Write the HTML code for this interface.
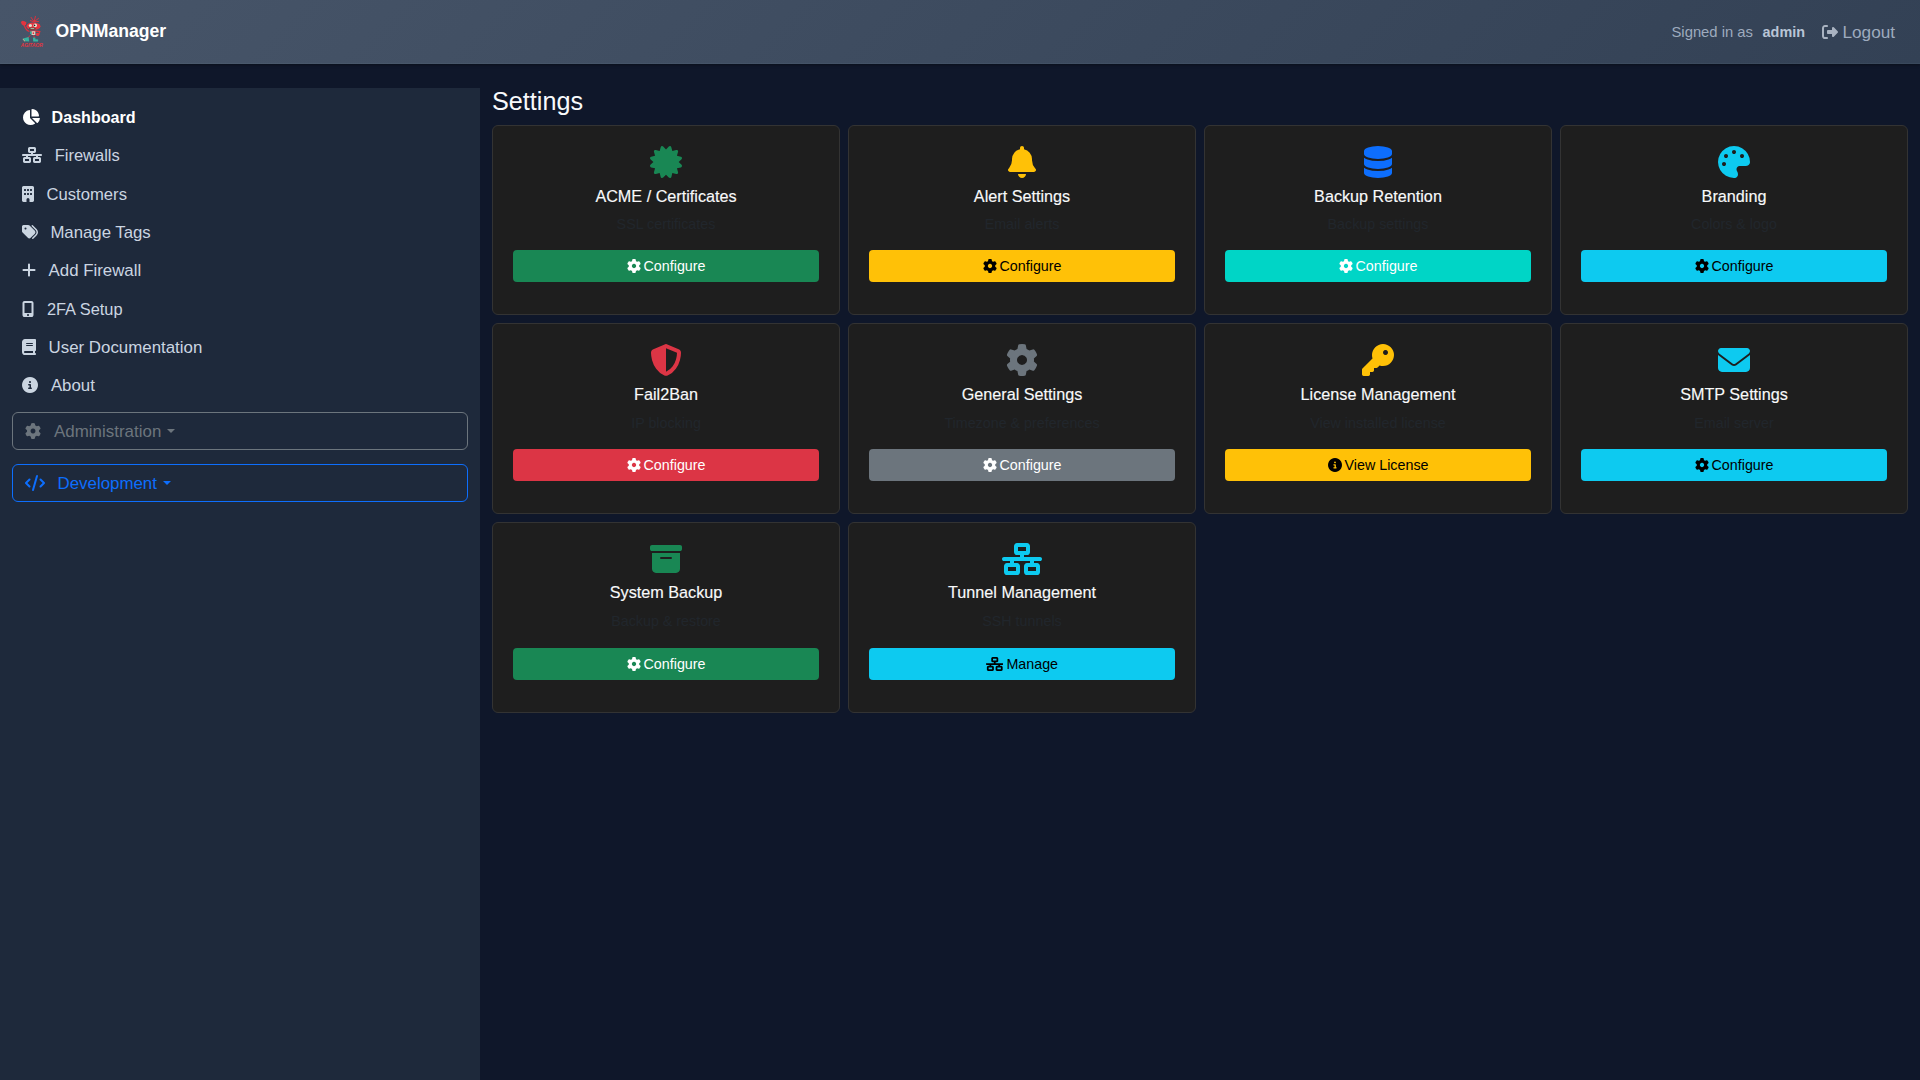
<!DOCTYPE html>
<html><head><meta charset="utf-8"><title>OPNManager - Settings</title>
<style>
html,body{margin:0;padding:0;}
body{width:1920px;height:1080px;position:relative;overflow:hidden;background:#0f172a;font-family:"Liberation Sans",sans-serif;}
#hdr{position:absolute;left:0;top:0;width:1920px;height:64px;box-sizing:border-box;border-bottom:1px solid rgba(148,163,184,.07);box-shadow:0 1px 3px rgba(0,0,0,.35);background:linear-gradient(135deg,#475569 0%,#334155 100%);}
#side{position:absolute;left:0;top:88px;width:480px;height:992px;background:#1e293b;}
.card{position:absolute;width:348px;box-sizing:border-box;background:#1e1e1e;border:1px solid #333;border-radius:6px;}
.btn{position:absolute;width:306px;height:32px;border-radius:4px;text-align:center;line-height:32px;font-size:14.3px;white-space:nowrap;}
</style></head><body>
<div id="hdr"></div>
<svg style="position:absolute;left:19px;top:15px;width:26px;height:33px" viewBox="0 0 26 33">
<g stroke="#e0303c" stroke-width="1" stroke-linecap="round" fill="none">
<path d="M15.3 6.5 L16.4 1.3 M15 6.5 L12.1 2.4 M15.5 6.5 L19.5 3.4 M15.6 6.8 L19.5 6.5 M14.8 6.8 L11.4 5.6"/>
<path d="M9.8 16.3 Q6.5 15 5 9.5" stroke-width="1.2"/>
<path d="M16.5 16.2 L20.8 16.6 L20 19" stroke-width="1.2"/>
<path d="M11 20.5 L8.6 23.2 M14.8 20.5 L15.4 23" stroke-width="1"/>
</g>
<g fill="#e3343f">
<ellipse cx="14.3" cy="11.3" rx="6.9" ry="3.8"/>
<ellipse cx="19.6" cy="11.2" rx="1.8" ry="2.3"/>
<path d="M1.8 7 L3.5 5.8 L5.5 6.2 L7.4 7.2 L7 9.8 L5 10.8 L2.8 9.6 Z"/>
<ellipse cx="18.6" cy="19.4" rx="1.8" ry="1.6"/>
<rect x="10.8" y="15.6" width="5.8" height="1.2"/>
<text x="12.7" y="32.2" font-size="5.6" font-family="Liberation Sans" font-weight="bold" font-style="italic" text-anchor="middle" textLength="22" lengthAdjust="spacingAndGlyphs">AGITAOR</text>
</g>
<circle cx="11.4" cy="10.5" r="1.6" fill="#dfe3cf"/><circle cx="16.2" cy="10.4" r="1.8" fill="#eceedd"/>
<circle cx="15.6" cy="10.4" r="0.8" fill="#1a1a1a"/>
<rect x="10.3" y="12.8" width="6.2" height="1.8" rx="0.5" fill="#2e4a3c"/>
<rect x="11.5" y="13.1" width="3.8" height="0.7" fill="#cfd8c0"/>
<rect x="12.5" y="16.3" width="3.8" height="3.6" fill="#e6e2cf"/><rect x="13.6" y="17.3" width="1.6" height="1.7" fill="#e3343f"/>
<rect x="11" y="16.3" width="1.5" height="2.8" fill="#2fae9c"/>
<path d="M4 23.4 L9.6 22 L10.2 26.6 L6.4 26.2 Z" fill="#35b3a0"/>
<path d="M4 23.4 L6.4 26.2 L5.6 26.6 L3.6 24.2 Z" fill="#c9c39a"/>
<path d="M13.9 22.4 L16.6 22.8 L16.2 24.2 L19.2 24.4 L19 26.6 L14.2 26.6 Z" fill="#35b3a0"/>
</svg>
<div style="position:absolute;left:55.60px;top:23px;font-size:17.6px;line-height:17.6px;color:#ffffff;font-weight:bold;white-space:nowrap;">OPNManager</div>
<div style="position:absolute;left:1671.50px;top:25px;font-size:14.8px;line-height:14.8px;color:#9eabbe;font-weight:normal;white-space:nowrap;">Signed in as</div>
<div style="position:absolute;left:1762.60px;top:25px;font-size:14.4px;line-height:14.4px;color:#b9c5d6;font-weight:bold;white-space:nowrap;">admin</div>
<svg style="width:16.000px;height:16px;position:absolute;left:1821.60px;top:24.00px;" viewBox="0 0 512 512" fill="#a9b3c1"><path d="M378 106 501 229 378 106 501 229Q512 240 512 256Q512 272 501 283L378 406Q368 416 354 416Q340 416 330 406Q320 396 320 382V320H192Q178 320 169 311Q160 302 160 288V224Q160 210 169 201Q178 192 192 192H320V130Q320 116 330 106Q340 96 354 96Q368 96 378 106ZM160 96H96H160H96Q82 96 73 105Q64 114 64 128V384Q64 398 73 407Q82 416 96 416H160Q174 416 183 425Q192 434 192 448Q192 462 183 471Q174 480 160 480H96Q55 479 28 452Q1 425 0 384V128Q1 87 28 60Q55 33 96 32H160Q174 32 183 41Q192 50 192 64Q192 78 183 87Q174 96 160 96Z"/></svg>
<div style="position:absolute;left:1842.50px;top:24px;font-size:17.2px;line-height:17.2px;color:#9eabbe;font-weight:normal;white-space:nowrap;">Logout</div>
<div id="side"></div>
<svg style="width:18.000px;height:16px;position:absolute;left:22.00px;top:109.00px;" viewBox="0 0 576 512" fill="#ffffff"><path d="M304 240V17V240V17Q305 2 320 0Q383 1 433 31Q484 60 513 111Q543 161 544 224Q542 239 527 240H304ZM32 272Q34 179 92 114Q149 48 239 34Q254 34 256 50V288L413 445Q423 457 411 468Q351 511 272 512Q205 511 151 479Q97 447 65 393Q33 339 32 272ZM558 288Q574 290 574 305Q561 391 500 447Q489 456 479 447L320 288H558Z"/></svg>
<div style="position:absolute;left:51.60px;top:109px;font-size:16.08px;line-height:16.08px;color:#ffffff;font-weight:bold;white-space:nowrap;">Dashboard</div>
<svg style="width:20.000px;height:16px;position:absolute;left:22.00px;top:147.00px;" viewBox="0 0 640 512" fill="#cbd5e1"><path d="M256 64H384H256H384V128H256V64ZM240 0Q220 1 206 14Q193 28 192 48V144Q193 164 206 178Q220 191 240 192H288V224H32Q18 224 9 233Q0 242 0 256Q0 270 9 279Q18 288 32 288H128V320H80Q60 321 46 334Q33 348 32 368V464Q33 484 46 498Q60 511 80 512H240Q260 511 274 498Q287 484 288 464V368Q287 348 274 334Q260 321 240 320H192V288H448V320H400Q380 321 366 334Q353 348 352 368V464Q353 484 366 498Q380 511 400 512H560Q580 511 594 498Q607 484 608 464V368Q607 348 594 334Q580 321 560 320H512V288H608Q622 288 631 279Q640 270 640 256Q640 242 631 233Q622 224 608 224H352V192H400Q420 191 434 178Q447 164 448 144V48Q447 28 434 14Q420 1 400 0H240ZM96 448V384V448V384H224V448H96ZM416 384H544H416H544V448H416V384Z"/></svg>
<div style="position:absolute;left:54.70px;top:147px;font-size:16.5px;line-height:16.5px;color:#cbd5e1;font-weight:normal;white-space:nowrap;">Firewalls</div>
<svg style="width:12.000px;height:16px;position:absolute;left:22.00px;top:186.00px;" viewBox="0 0 384 512" fill="#cbd5e1"><path d="M48 0Q28 1 14 14Q1 28 0 48V464Q1 484 14 498Q28 511 48 512H144V432Q145 412 158 398Q172 385 192 384Q212 385 226 398Q239 412 240 432V512H336Q356 511 370 498Q383 484 384 464V48Q383 28 370 14Q356 1 336 0H48ZM64 240Q65 225 80 224H112Q127 225 128 240V272Q127 287 112 288H80Q65 287 64 272V240ZM176 224H208H176H208Q223 225 224 240V272Q223 287 208 288H176Q161 287 160 272V240Q161 225 176 224ZM256 240Q257 225 272 224H304Q319 225 320 240V272Q319 287 304 288H272Q257 287 256 272V240ZM80 96H112H80H112Q127 97 128 112V144Q127 159 112 160H80Q65 159 64 144V112Q65 97 80 96ZM160 112Q161 97 176 96H208Q223 97 224 112V144Q223 159 208 160H176Q161 159 160 144V112ZM272 96H304H272H304Q319 97 320 112V144Q319 159 304 160H272Q257 159 256 144V112Q257 97 272 96Z"/></svg>
<div style="position:absolute;left:46.50px;top:187px;font-size:16.65px;line-height:16.65px;color:#cbd5e1;font-weight:normal;white-space:nowrap;">Customers</div>
<svg style="width:16.000px;height:16px;position:absolute;left:22.00px;top:224.00px;" viewBox="0 0 512 512" fill="#cbd5e1"><path d="M345 39 473 168 345 39 473 168Q512 210 512 264Q512 318 473 360L361 473Q344 487 327 473Q313 456 327 439L439 326Q464 299 464 264Q464 229 439 202L311 73Q297 56 311 39Q328 25 345 39ZM0 230V80V230V80Q1 60 14 46Q28 33 48 32H198Q224 32 243 51L411 219Q430 238 430 264Q430 289 411 309L277 443Q258 461 232 461Q207 461 187 443L19 275Q0 256 0 230ZM144 144Q144 130 135 121Q126 112 112 112Q98 112 89 121Q80 130 80 144Q80 158 89 167Q98 176 112 176Q126 176 135 167Q144 158 144 144Z"/></svg>
<div style="position:absolute;left:50.40px;top:225px;font-size:16.77px;line-height:16.77px;color:#cbd5e1;font-weight:normal;white-space:nowrap;">Manage Tags</div>
<svg style="width:14.000px;height:16px;position:absolute;left:22.00px;top:262.00px;" viewBox="0 0 448 512" fill="#cbd5e1"><path d="M256 80Q256 66 247 57Q238 48 224 48Q210 48 201 57Q192 66 192 80V224H48Q34 224 25 233Q16 242 16 256Q16 270 25 279Q34 288 48 288H192V432Q192 446 201 455Q210 464 224 464Q238 464 247 455Q256 446 256 432V288H400Q414 288 423 279Q432 270 432 256Q432 242 423 233Q414 224 400 224H256V80Z"/></svg>
<div style="position:absolute;left:48.60px;top:263px;font-size:16.83px;line-height:16.83px;color:#cbd5e1;font-weight:normal;white-space:nowrap;">Add Firewall</div>
<svg style="width:12.000px;height:16px;position:absolute;left:22.00px;top:301.00px;" viewBox="0 0 384 512" fill="#cbd5e1"><path d="M16 64Q17 37 35 19Q53 1 80 0H304Q331 1 349 19Q367 37 368 64V448Q367 475 349 493Q331 511 304 512H80Q53 511 35 493Q17 475 16 448V64ZM224 448Q224 434 215 425Q206 416 192 416Q178 416 169 425Q160 434 160 448Q160 462 169 471Q178 480 192 480Q206 480 215 471Q224 462 224 448ZM304 64H80H304H80V384H304V64Z"/></svg>
<div style="position:absolute;left:46.90px;top:301px;font-size:16.4px;line-height:16.4px;color:#cbd5e1;font-weight:normal;white-space:nowrap;">2FA Setup</div>
<svg style="width:14.000px;height:16px;position:absolute;left:22.00px;top:339.00px;" viewBox="0 0 448 512" fill="#cbd5e1"><path d="M96 0Q55 1 28 28Q1 55 0 96V416Q1 457 28 484Q55 511 96 512H384H416Q430 512 439 503Q448 494 448 480Q448 466 439 457Q430 448 416 448V384Q430 384 439 375Q448 366 448 352V32Q448 18 439 9Q430 0 416 0H384ZM96 384H352H96H352V448H96Q82 448 73 439Q64 430 64 416Q64 402 73 393Q82 384 96 384ZM128 144Q129 129 144 128H336Q351 129 352 144Q351 159 336 160H144Q129 159 128 144ZM144 192H336H144H336Q351 193 352 208Q351 223 336 224H144Q129 223 128 208Q129 193 144 192Z"/></svg>
<div style="position:absolute;left:48.60px;top:340px;font-size:16.86px;line-height:16.86px;color:#cbd5e1;font-weight:normal;white-space:nowrap;">User Documentation</div>
<svg style="width:16.000px;height:16px;position:absolute;left:22.00px;top:377.00px;" viewBox="0 0 512 512" fill="#cbd5e1"><path d="M256 512Q326 511 384 478Q442 444 478 384Q512 323 512 256Q512 189 478 128Q442 68 384 34Q326 1 256 0Q186 1 128 34Q70 68 34 128Q0 189 0 256Q0 323 34 384Q70 444 128 478Q186 511 256 512ZM216 336H240H216H240V272H216Q194 270 192 248Q194 226 216 224H264Q286 226 288 248V336H296Q318 338 320 360Q318 382 296 384H216Q194 382 192 360Q194 338 216 336ZM256 128Q270 128 279 137Q288 146 288 160Q288 174 279 183Q270 192 256 192Q242 192 233 183Q224 174 224 160Q224 146 233 137Q242 128 256 128Z"/></svg>
<div style="position:absolute;left:50.90px;top:378px;font-size:16.84px;line-height:16.84px;color:#cbd5e1;font-weight:normal;white-space:nowrap;">About</div>
<div style="position:absolute;left:12px;top:412px;width:456px;height:38px;box-sizing:border-box;border:1px solid #6c757d;border-radius:6px"></div>
<svg style="width:16.000px;height:16px;position:absolute;left:25.00px;top:423.00px;" viewBox="0 0 512 512" fill="#6c757d"><path d="M496 167Q500 181 490 191L446 231Q448 243 448 256Q448 269 446 281L490 321Q500 331 496 345Q489 363 480 380L475 388Q465 404 453 419Q443 430 429 426L373 408Q353 424 329 433L317 491Q313 505 298 508Q278 512 256 512Q234 512 213 508Q199 505 195 491L183 433Q159 424 139 408L83 426Q69 430 59 419Q46 404 37 388L32 380Q23 363 16 346Q12 331 22 321L66 282Q64 269 64 256Q64 243 66 231L22 191Q12 181 16 167Q23 149 32 132L37 124Q46 108 59 93Q69 82 83 86L139 104Q159 88 183 78L195 21Q199 7 214 4Q234 0 256 0Q278 0 299 4Q313 7 317 21L329 78Q353 88 373 104L429 86Q443 82 453 93Q466 108 476 124L480 132Q489 149 496 167ZM256 336Q301 335 325 296Q347 256 325 216Q301 177 256 176Q211 177 187 216Q165 256 187 296Q211 335 256 336Z"/></svg>
<div style="position:absolute;left:54.00px;top:424px;font-size:16.94px;line-height:16.94px;color:#6c757d;font-weight:normal;white-space:nowrap;">Administration</div>
<div style="position:absolute;left:166.5px;top:429px;width:0;height:0;border-left:4.5px solid transparent;border-right:4.5px solid transparent;border-top:4.8px solid #6c757d"></div>
<div style="position:absolute;left:12px;top:464px;width:456px;height:38px;box-sizing:border-box;border:1px solid #0d6efd;border-radius:6px"></div>
<svg style="width:20.000px;height:16px;position:absolute;left:25.00px;top:475.00px;" viewBox="0 0 640 512" fill="#0d6efd"><path d="M393 1Q380 -2 368 4Q357 10 353 23L225 471Q222 484 228 496Q234 507 247 511Q260 514 272 508Q283 502 287 489L415 41Q418 28 412 16Q406 5 393 1ZM473 121Q464 131 464 144Q464 157 473 167L563 256L473 345Q464 355 464 368Q464 381 473 391Q483 400 496 400Q509 400 519 391L631 279Q640 269 640 256Q640 243 631 233L519 121Q509 112 496 112Q483 112 473 121ZM167 121Q157 112 144 112Q131 112 121 121L9 233Q0 243 0 256Q0 269 9 279L121 391Q131 400 144 400Q157 400 167 391Q176 381 176 368Q176 355 167 345L77 256L167 167Q176 157 176 144Q176 131 167 121Z"/></svg>
<div style="position:absolute;left:57.50px;top:476px;font-size:16.89px;line-height:16.89px;color:#0d6efd;font-weight:normal;white-space:nowrap;">Development</div>
<div style="position:absolute;left:162.5px;top:481px;width:0;height:0;border-left:4.5px solid transparent;border-right:4.5px solid transparent;border-top:4.8px solid #0d6efd"></div>
<div style="position:absolute;left:492.00px;top:89px;font-size:25.2px;line-height:25.2px;color:#f8fafc;font-weight:normal;white-space:nowrap;">Settings</div>
<div class="card" style="left:492px;top:125px;height:190px"></div>
<svg style="width:32.000px;height:32px;position:absolute;left:650.00px;top:146.00px;" viewBox="0 0 512 512" fill="#198754"><path d="M211 7Q201 -2 188 1Q174 5 171 18L155 81L93 63Q79 60 69 69Q60 79 63 93L81 155L18 171Q5 174 1 188Q-2 201 7 211L54 256L7 301Q-2 311 1 324Q5 338 18 342L81 357L63 419Q60 433 69 443Q79 452 93 449L155 431L171 494Q174 507 188 511Q201 514 211 505L256 459L301 505Q311 514 324 511Q338 507 342 494L357 431L419 449Q433 452 443 443Q452 433 449 419L431 357L494 342Q507 338 511 324Q514 311 505 301L459 256L505 211Q514 201 511 188Q507 174 494 171L431 155L449 93Q452 79 443 69Q433 60 419 63L357 81L341 18Q338 5 324 1Q311 -2 301 7L256 54L211 7Z"/></svg>
<div style="position:absolute;left:466.00px;width:400px;text-align:center;top:188px;font-size:16.2px;line-height:16.2px;color:#f8f9fa;font-weight:normal;white-space:nowrap;-webkit-text-stroke:0.15px #f8f9fa">ACME / Certificates</div>
<div style="position:absolute;left:466.00px;width:400px;text-align:center;top:217px;font-size:14.3px;line-height:14.3px;color:#21262c;font-weight:normal;white-space:nowrap;">SSL certificates</div>
<div class="btn" style="left:513px;top:250px;background:#198754;color:#fff"><svg style="width:14.000px;height:14px;vertical-align:-2px;margin-right:3px" viewBox="0 0 512 512" fill="#fff"><path d="M496 167Q500 181 490 191L446 231Q448 243 448 256Q448 269 446 281L490 321Q500 331 496 345Q489 363 480 380L475 388Q465 404 453 419Q443 430 429 426L373 408Q353 424 329 433L317 491Q313 505 298 508Q278 512 256 512Q234 512 213 508Q199 505 195 491L183 433Q159 424 139 408L83 426Q69 430 59 419Q46 404 37 388L32 380Q23 363 16 346Q12 331 22 321L66 282Q64 269 64 256Q64 243 66 231L22 191Q12 181 16 167Q23 149 32 132L37 124Q46 108 59 93Q69 82 83 86L139 104Q159 88 183 78L195 21Q199 7 214 4Q234 0 256 0Q278 0 299 4Q313 7 317 21L329 78Q353 88 373 104L429 86Q443 82 453 93Q466 108 476 124L480 132Q489 149 496 167ZM256 336Q301 335 325 296Q347 256 325 216Q301 177 256 176Q211 177 187 216Q165 256 187 296Q211 335 256 336Z"/></svg><span style="font-size:14.3px">Configure</span></div>
<div class="card" style="left:848px;top:125px;height:190px"></div>
<svg style="width:28.000px;height:32px;position:absolute;left:1008.00px;top:146.00px;" viewBox="0 0 448 512" fill="#ffc107"><path d="M224 0Q210 0 201 9Q192 18 192 32V51Q136 63 101 106Q65 149 64 208V227Q63 299 16 354L8 363Q-5 378 3 397Q12 415 32 416H416Q436 415 445 397Q453 378 440 363L433 354Q385 300 384 227V208Q383 149 347 106Q312 63 256 51V32Q256 18 247 9Q238 0 224 0ZM269 493Q288 474 288 448H224H160Q160 474 179 493Q198 512 224 512Q250 512 269 493Z"/></svg>
<div style="position:absolute;left:822.00px;width:400px;text-align:center;top:188px;font-size:16.2px;line-height:16.2px;color:#f8f9fa;font-weight:normal;white-space:nowrap;-webkit-text-stroke:0.15px #f8f9fa">Alert Settings</div>
<div style="position:absolute;left:822.00px;width:400px;text-align:center;top:217px;font-size:14.3px;line-height:14.3px;color:#21262c;font-weight:normal;white-space:nowrap;">Email alerts</div>
<div class="btn" style="left:869px;top:250px;background:#ffc107;color:#000"><svg style="width:14.000px;height:14px;vertical-align:-2px;margin-right:3px" viewBox="0 0 512 512" fill="#000"><path d="M496 167Q500 181 490 191L446 231Q448 243 448 256Q448 269 446 281L490 321Q500 331 496 345Q489 363 480 380L475 388Q465 404 453 419Q443 430 429 426L373 408Q353 424 329 433L317 491Q313 505 298 508Q278 512 256 512Q234 512 213 508Q199 505 195 491L183 433Q159 424 139 408L83 426Q69 430 59 419Q46 404 37 388L32 380Q23 363 16 346Q12 331 22 321L66 282Q64 269 64 256Q64 243 66 231L22 191Q12 181 16 167Q23 149 32 132L37 124Q46 108 59 93Q69 82 83 86L139 104Q159 88 183 78L195 21Q199 7 214 4Q234 0 256 0Q278 0 299 4Q313 7 317 21L329 78Q353 88 373 104L429 86Q443 82 453 93Q466 108 476 124L480 132Q489 149 496 167ZM256 336Q301 335 325 296Q347 256 325 216Q301 177 256 176Q211 177 187 216Q165 256 187 296Q211 335 256 336Z"/></svg><span style="font-size:14.3px">Configure</span></div>
<div class="card" style="left:1204px;top:125px;height:190px"></div>
<svg style="width:28.000px;height:32px;position:absolute;left:1364.00px;top:146.00px;" viewBox="0 0 448 512" fill="#0d6efd"><path d="M448 80V128V80V128Q446 162 382 185Q319 207 224 208Q129 207 66 185Q2 162 0 128V80Q2 46 66 23Q129 1 224 0Q319 1 382 23Q446 46 448 80ZM393 215Q425 204 448 186V288Q446 322 382 345Q319 367 224 368Q129 367 66 345Q2 322 0 288V186Q23 204 55 215Q125 239 224 240Q323 239 393 215ZM0 346Q23 364 55 375Q125 399 224 400Q323 399 393 375Q425 364 448 346V432Q446 466 382 489Q319 511 224 512Q129 511 66 489Q2 466 0 432V346Z"/></svg>
<div style="position:absolute;left:1178.00px;width:400px;text-align:center;top:188px;font-size:16.2px;line-height:16.2px;color:#f8f9fa;font-weight:normal;white-space:nowrap;-webkit-text-stroke:0.15px #f8f9fa">Backup Retention</div>
<div style="position:absolute;left:1178.00px;width:400px;text-align:center;top:217px;font-size:14.3px;line-height:14.3px;color:#21262c;font-weight:normal;white-space:nowrap;">Backup settings</div>
<div class="btn" style="left:1225px;top:250px;background:#00d5c6;color:#fff"><svg style="width:14.000px;height:14px;vertical-align:-2px;margin-right:3px" viewBox="0 0 512 512" fill="#fff"><path d="M496 167Q500 181 490 191L446 231Q448 243 448 256Q448 269 446 281L490 321Q500 331 496 345Q489 363 480 380L475 388Q465 404 453 419Q443 430 429 426L373 408Q353 424 329 433L317 491Q313 505 298 508Q278 512 256 512Q234 512 213 508Q199 505 195 491L183 433Q159 424 139 408L83 426Q69 430 59 419Q46 404 37 388L32 380Q23 363 16 346Q12 331 22 321L66 282Q64 269 64 256Q64 243 66 231L22 191Q12 181 16 167Q23 149 32 132L37 124Q46 108 59 93Q69 82 83 86L139 104Q159 88 183 78L195 21Q199 7 214 4Q234 0 256 0Q278 0 299 4Q313 7 317 21L329 78Q353 88 373 104L429 86Q443 82 453 93Q466 108 476 124L480 132Q489 149 496 167ZM256 336Q301 335 325 296Q347 256 325 216Q301 177 256 176Q211 177 187 216Q165 256 187 296Q211 335 256 336Z"/></svg><span style="font-size:14.3px">Configure</span></div>
<div class="card" style="left:1560px;top:125px;height:190px"></div>
<svg style="width:32.000px;height:32px;position:absolute;left:1718.00px;top:146.00px;" viewBox="0 0 512 512" fill="#0dcaf0"><path d="M512 256Q512 257 512 257Q512 258 512 259Q511 286 490 303Q470 320 442 320H344Q324 321 310 334Q297 348 296 368Q296 373 297 378Q300 392 307 406Q307 407 308 408Q318 428 320 450Q320 474 305 492Q291 510 267 512Q261 512 256 512Q184 511 127 477Q69 443 35 385Q1 328 0 256Q1 184 35 127Q69 69 127 35Q184 1 256 0Q328 1 385 35Q443 69 477 127Q511 184 512 256ZM128 288Q128 274 119 265Q110 256 96 256Q82 256 73 265Q64 274 64 288Q64 302 73 311Q82 320 96 320Q110 320 119 311Q128 302 128 288ZM128 192Q142 192 151 183Q160 174 160 160Q160 146 151 137Q142 128 128 128Q114 128 105 137Q96 146 96 160Q96 174 105 183Q114 192 128 192ZM288 96Q288 82 279 73Q270 64 256 64Q242 64 233 73Q224 82 224 96Q224 110 233 119Q242 128 256 128Q270 128 279 119Q288 110 288 96ZM384 192Q398 192 407 183Q416 174 416 160Q416 146 407 137Q398 128 384 128Q370 128 361 137Q352 146 352 160Q352 174 361 183Q370 192 384 192Z"/></svg>
<div style="position:absolute;left:1534.00px;width:400px;text-align:center;top:188px;font-size:16.2px;line-height:16.2px;color:#f8f9fa;font-weight:normal;white-space:nowrap;-webkit-text-stroke:0.15px #f8f9fa">Branding</div>
<div style="position:absolute;left:1534.00px;width:400px;text-align:center;top:217px;font-size:14.3px;line-height:14.3px;color:#21262c;font-weight:normal;white-space:nowrap;">Colors &amp; logo</div>
<div class="btn" style="left:1581px;top:250px;background:#0dcaf0;color:#000"><svg style="width:14.000px;height:14px;vertical-align:-2px;margin-right:3px" viewBox="0 0 512 512" fill="#000"><path d="M496 167Q500 181 490 191L446 231Q448 243 448 256Q448 269 446 281L490 321Q500 331 496 345Q489 363 480 380L475 388Q465 404 453 419Q443 430 429 426L373 408Q353 424 329 433L317 491Q313 505 298 508Q278 512 256 512Q234 512 213 508Q199 505 195 491L183 433Q159 424 139 408L83 426Q69 430 59 419Q46 404 37 388L32 380Q23 363 16 346Q12 331 22 321L66 282Q64 269 64 256Q64 243 66 231L22 191Q12 181 16 167Q23 149 32 132L37 124Q46 108 59 93Q69 82 83 86L139 104Q159 88 183 78L195 21Q199 7 214 4Q234 0 256 0Q278 0 299 4Q313 7 317 21L329 78Q353 88 373 104L429 86Q443 82 453 93Q466 108 476 124L480 132Q489 149 496 167ZM256 336Q301 335 325 296Q347 256 325 216Q301 177 256 176Q211 177 187 216Q165 256 187 296Q211 335 256 336Z"/></svg><span style="font-size:14.3px">Configure</span></div>
<div class="card" style="left:492px;top:323px;height:191px"></div>
<svg style="width:32.000px;height:32px;position:absolute;left:650.00px;top:344.00px;" viewBox="0 0 512 512" fill="#dc3545"><path d="M256 0Q263 0 269 3L458 83Q475 90 485 105Q496 120 496 140Q497 191 479 260Q461 329 414 394Q368 460 282 503Q256 515 230 503Q144 460 98 394Q51 329 33 260Q15 191 16 140Q16 120 27 105Q37 90 54 83L243 3Q249 0 256 0ZM256 67V445V67V445Q324 410 363 356Q401 302 417 245Q432 187 432 141L256 67Z"/></svg>
<div style="position:absolute;left:466.00px;width:400px;text-align:center;top:386px;font-size:16.2px;line-height:16.2px;color:#f8f9fa;font-weight:normal;white-space:nowrap;-webkit-text-stroke:0.15px #f8f9fa">Fail2Ban</div>
<div style="position:absolute;left:466.00px;width:400px;text-align:center;top:416px;font-size:14.3px;line-height:14.3px;color:#21262c;font-weight:normal;white-space:nowrap;">IP blocking</div>
<div class="btn" style="left:513px;top:449px;background:#dc3545;color:#fff"><svg style="width:14.000px;height:14px;vertical-align:-2px;margin-right:3px" viewBox="0 0 512 512" fill="#fff"><path d="M496 167Q500 181 490 191L446 231Q448 243 448 256Q448 269 446 281L490 321Q500 331 496 345Q489 363 480 380L475 388Q465 404 453 419Q443 430 429 426L373 408Q353 424 329 433L317 491Q313 505 298 508Q278 512 256 512Q234 512 213 508Q199 505 195 491L183 433Q159 424 139 408L83 426Q69 430 59 419Q46 404 37 388L32 380Q23 363 16 346Q12 331 22 321L66 282Q64 269 64 256Q64 243 66 231L22 191Q12 181 16 167Q23 149 32 132L37 124Q46 108 59 93Q69 82 83 86L139 104Q159 88 183 78L195 21Q199 7 214 4Q234 0 256 0Q278 0 299 4Q313 7 317 21L329 78Q353 88 373 104L429 86Q443 82 453 93Q466 108 476 124L480 132Q489 149 496 167ZM256 336Q301 335 325 296Q347 256 325 216Q301 177 256 176Q211 177 187 216Q165 256 187 296Q211 335 256 336Z"/></svg><span style="font-size:14.3px">Configure</span></div>
<div class="card" style="left:848px;top:323px;height:191px"></div>
<svg style="width:32.000px;height:32px;position:absolute;left:1006.00px;top:344.00px;" viewBox="0 0 512 512" fill="#6c757d"><path d="M496 167Q500 181 490 191L446 231Q448 243 448 256Q448 269 446 281L490 321Q500 331 496 345Q489 363 480 380L475 388Q465 404 453 419Q443 430 429 426L373 408Q353 424 329 433L317 491Q313 505 298 508Q278 512 256 512Q234 512 213 508Q199 505 195 491L183 433Q159 424 139 408L83 426Q69 430 59 419Q46 404 37 388L32 380Q23 363 16 346Q12 331 22 321L66 282Q64 269 64 256Q64 243 66 231L22 191Q12 181 16 167Q23 149 32 132L37 124Q46 108 59 93Q69 82 83 86L139 104Q159 88 183 78L195 21Q199 7 214 4Q234 0 256 0Q278 0 299 4Q313 7 317 21L329 78Q353 88 373 104L429 86Q443 82 453 93Q466 108 476 124L480 132Q489 149 496 167ZM256 336Q301 335 325 296Q347 256 325 216Q301 177 256 176Q211 177 187 216Q165 256 187 296Q211 335 256 336Z"/></svg>
<div style="position:absolute;left:822.00px;width:400px;text-align:center;top:386px;font-size:16.2px;line-height:16.2px;color:#f8f9fa;font-weight:normal;white-space:nowrap;-webkit-text-stroke:0.15px #f8f9fa">General Settings</div>
<div style="position:absolute;left:822.00px;width:400px;text-align:center;top:416px;font-size:14.3px;line-height:14.3px;color:#21262c;font-weight:normal;white-space:nowrap;">Timezone &amp; preferences</div>
<div class="btn" style="left:869px;top:449px;background:#6c757d;color:#fff"><svg style="width:14.000px;height:14px;vertical-align:-2px;margin-right:3px" viewBox="0 0 512 512" fill="#fff"><path d="M496 167Q500 181 490 191L446 231Q448 243 448 256Q448 269 446 281L490 321Q500 331 496 345Q489 363 480 380L475 388Q465 404 453 419Q443 430 429 426L373 408Q353 424 329 433L317 491Q313 505 298 508Q278 512 256 512Q234 512 213 508Q199 505 195 491L183 433Q159 424 139 408L83 426Q69 430 59 419Q46 404 37 388L32 380Q23 363 16 346Q12 331 22 321L66 282Q64 269 64 256Q64 243 66 231L22 191Q12 181 16 167Q23 149 32 132L37 124Q46 108 59 93Q69 82 83 86L139 104Q159 88 183 78L195 21Q199 7 214 4Q234 0 256 0Q278 0 299 4Q313 7 317 21L329 78Q353 88 373 104L429 86Q443 82 453 93Q466 108 476 124L480 132Q489 149 496 167ZM256 336Q301 335 325 296Q347 256 325 216Q301 177 256 176Q211 177 187 216Q165 256 187 296Q211 335 256 336Z"/></svg><span style="font-size:14.3px">Configure</span></div>
<div class="card" style="left:1204px;top:323px;height:191px"></div>
<svg style="width:32.000px;height:32px;position:absolute;left:1362.00px;top:344.00px;" viewBox="0 0 512 512" fill="#ffc107"><path d="M336 352Q411 350 460 300Q510 251 512 176Q510 101 460 52Q411 2 336 0Q261 2 212 52Q162 101 160 176Q160 204 168 230L7 391Q0 398 0 408V488Q2 510 24 512H104Q126 510 128 488V448H168Q190 446 192 424V384H232Q242 384 249 377L282 344Q308 352 336 352ZM376 96Q399 97 411 116Q421 136 411 156Q399 175 376 176Q353 175 341 156Q331 136 341 116Q353 97 376 96Z"/></svg>
<div style="position:absolute;left:1178.00px;width:400px;text-align:center;top:386px;font-size:16.2px;line-height:16.2px;color:#f8f9fa;font-weight:normal;white-space:nowrap;-webkit-text-stroke:0.15px #f8f9fa">License Management</div>
<div style="position:absolute;left:1178.00px;width:400px;text-align:center;top:416px;font-size:14.3px;line-height:14.3px;color:#21262c;font-weight:normal;white-space:nowrap;">View installed license</div>
<div class="btn" style="left:1225px;top:449px;background:#ffc107;color:#000"><svg style="width:14.000px;height:14px;vertical-align:-2px;margin-right:3px" viewBox="0 0 512 512" fill="#000"><path d="M256 512Q326 511 384 478Q442 444 478 384Q512 323 512 256Q512 189 478 128Q442 68 384 34Q326 1 256 0Q186 1 128 34Q70 68 34 128Q0 189 0 256Q0 323 34 384Q70 444 128 478Q186 511 256 512ZM216 336H240H216H240V272H216Q194 270 192 248Q194 226 216 224H264Q286 226 288 248V336H296Q318 338 320 360Q318 382 296 384H216Q194 382 192 360Q194 338 216 336ZM256 128Q270 128 279 137Q288 146 288 160Q288 174 279 183Q270 192 256 192Q242 192 233 183Q224 174 224 160Q224 146 233 137Q242 128 256 128Z"/></svg><span style="font-size:14.3px">View License</span></div>
<div class="card" style="left:1560px;top:323px;height:191px"></div>
<svg style="width:32.000px;height:32px;position:absolute;left:1718.00px;top:344.00px;" viewBox="0 0 512 512" fill="#0dcaf0"><path d="M48 64Q28 65 14 78Q1 92 0 112Q1 136 19 150L237 314Q256 326 275 314L493 150Q511 136 512 112Q511 92 498 78Q484 65 464 64H48ZM0 176V384V176V384Q1 411 19 429Q37 447 64 448H448Q475 447 493 429Q511 411 512 384V176L294 339Q277 352 256 352Q235 352 218 339L0 176Z"/></svg>
<div style="position:absolute;left:1534.00px;width:400px;text-align:center;top:386px;font-size:16.2px;line-height:16.2px;color:#f8f9fa;font-weight:normal;white-space:nowrap;-webkit-text-stroke:0.15px #f8f9fa">SMTP Settings</div>
<div style="position:absolute;left:1534.00px;width:400px;text-align:center;top:416px;font-size:14.3px;line-height:14.3px;color:#21262c;font-weight:normal;white-space:nowrap;">Email server</div>
<div class="btn" style="left:1581px;top:449px;background:#0dcaf0;color:#000"><svg style="width:14.000px;height:14px;vertical-align:-2px;margin-right:3px" viewBox="0 0 512 512" fill="#000"><path d="M496 167Q500 181 490 191L446 231Q448 243 448 256Q448 269 446 281L490 321Q500 331 496 345Q489 363 480 380L475 388Q465 404 453 419Q443 430 429 426L373 408Q353 424 329 433L317 491Q313 505 298 508Q278 512 256 512Q234 512 213 508Q199 505 195 491L183 433Q159 424 139 408L83 426Q69 430 59 419Q46 404 37 388L32 380Q23 363 16 346Q12 331 22 321L66 282Q64 269 64 256Q64 243 66 231L22 191Q12 181 16 167Q23 149 32 132L37 124Q46 108 59 93Q69 82 83 86L139 104Q159 88 183 78L195 21Q199 7 214 4Q234 0 256 0Q278 0 299 4Q313 7 317 21L329 78Q353 88 373 104L429 86Q443 82 453 93Q466 108 476 124L480 132Q489 149 496 167ZM256 336Q301 335 325 296Q347 256 325 216Q301 177 256 176Q211 177 187 216Q165 256 187 296Q211 335 256 336Z"/></svg><span style="font-size:14.3px">Configure</span></div>
<div class="card" style="left:492px;top:522px;height:191px"></div>
<svg style="width:32.000px;height:32px;position:absolute;left:650.00px;top:543.00px;" viewBox="0 0 512 512" fill="#198754"><path d="M32 32H480H32H480Q494 32 503 41Q512 50 512 64V96Q512 110 503 119Q494 128 480 128H32Q18 128 9 119Q0 110 0 96V64Q0 50 9 41Q18 32 32 32ZM32 160H480H32H480V416Q479 443 461 461Q443 479 416 480H96Q69 479 51 461Q33 443 32 416V160ZM160 240Q161 255 176 256H336Q351 255 352 240Q351 225 336 224H176Q161 225 160 240Z"/></svg>
<div style="position:absolute;left:466.00px;width:400px;text-align:center;top:584px;font-size:16.2px;line-height:16.2px;color:#f8f9fa;font-weight:normal;white-space:nowrap;-webkit-text-stroke:0.15px #f8f9fa">System Backup</div>
<div style="position:absolute;left:466.00px;width:400px;text-align:center;top:614px;font-size:14.3px;line-height:14.3px;color:#21262c;font-weight:normal;white-space:nowrap;">Backup &amp; restore</div>
<div class="btn" style="left:513px;top:648px;background:#198754;color:#fff"><svg style="width:14.000px;height:14px;vertical-align:-2px;margin-right:3px" viewBox="0 0 512 512" fill="#fff"><path d="M496 167Q500 181 490 191L446 231Q448 243 448 256Q448 269 446 281L490 321Q500 331 496 345Q489 363 480 380L475 388Q465 404 453 419Q443 430 429 426L373 408Q353 424 329 433L317 491Q313 505 298 508Q278 512 256 512Q234 512 213 508Q199 505 195 491L183 433Q159 424 139 408L83 426Q69 430 59 419Q46 404 37 388L32 380Q23 363 16 346Q12 331 22 321L66 282Q64 269 64 256Q64 243 66 231L22 191Q12 181 16 167Q23 149 32 132L37 124Q46 108 59 93Q69 82 83 86L139 104Q159 88 183 78L195 21Q199 7 214 4Q234 0 256 0Q278 0 299 4Q313 7 317 21L329 78Q353 88 373 104L429 86Q443 82 453 93Q466 108 476 124L480 132Q489 149 496 167ZM256 336Q301 335 325 296Q347 256 325 216Q301 177 256 176Q211 177 187 216Q165 256 187 296Q211 335 256 336Z"/></svg><span style="font-size:14.3px">Configure</span></div>
<div class="card" style="left:848px;top:522px;height:191px"></div>
<svg style="width:40.000px;height:32px;position:absolute;left:1002.00px;top:543.00px;" viewBox="0 0 640 512" fill="#0dcaf0"><path d="M256 64H384H256H384V128H256V64ZM240 0Q220 1 206 14Q193 28 192 48V144Q193 164 206 178Q220 191 240 192H288V224H32Q18 224 9 233Q0 242 0 256Q0 270 9 279Q18 288 32 288H128V320H80Q60 321 46 334Q33 348 32 368V464Q33 484 46 498Q60 511 80 512H240Q260 511 274 498Q287 484 288 464V368Q287 348 274 334Q260 321 240 320H192V288H448V320H400Q380 321 366 334Q353 348 352 368V464Q353 484 366 498Q380 511 400 512H560Q580 511 594 498Q607 484 608 464V368Q607 348 594 334Q580 321 560 320H512V288H608Q622 288 631 279Q640 270 640 256Q640 242 631 233Q622 224 608 224H352V192H400Q420 191 434 178Q447 164 448 144V48Q447 28 434 14Q420 1 400 0H240ZM96 448V384V448V384H224V448H96ZM416 384H544H416H544V448H416V384Z"/></svg>
<div style="position:absolute;left:822.00px;width:400px;text-align:center;top:584px;font-size:16.2px;line-height:16.2px;color:#f8f9fa;font-weight:normal;white-space:nowrap;-webkit-text-stroke:0.15px #f8f9fa">Tunnel Management</div>
<div style="position:absolute;left:822.00px;width:400px;text-align:center;top:614px;font-size:14.3px;line-height:14.3px;color:#21262c;font-weight:normal;white-space:nowrap;">SSH tunnels</div>
<div class="btn" style="left:869px;top:648px;background:#0dcaf0;color:#000"><svg style="width:17.500px;height:14px;vertical-align:-2px;margin-right:3px" viewBox="0 0 640 512" fill="#000"><path d="M256 64H384H256H384V128H256V64ZM240 0Q220 1 206 14Q193 28 192 48V144Q193 164 206 178Q220 191 240 192H288V224H32Q18 224 9 233Q0 242 0 256Q0 270 9 279Q18 288 32 288H128V320H80Q60 321 46 334Q33 348 32 368V464Q33 484 46 498Q60 511 80 512H240Q260 511 274 498Q287 484 288 464V368Q287 348 274 334Q260 321 240 320H192V288H448V320H400Q380 321 366 334Q353 348 352 368V464Q353 484 366 498Q380 511 400 512H560Q580 511 594 498Q607 484 608 464V368Q607 348 594 334Q580 321 560 320H512V288H608Q622 288 631 279Q640 270 640 256Q640 242 631 233Q622 224 608 224H352V192H400Q420 191 434 178Q447 164 448 144V48Q447 28 434 14Q420 1 400 0H240ZM96 448V384V448V384H224V448H96ZM416 384H544H416H544V448H416V384Z"/></svg><span style="font-size:14.3px">Manage</span></div>
</body></html>
